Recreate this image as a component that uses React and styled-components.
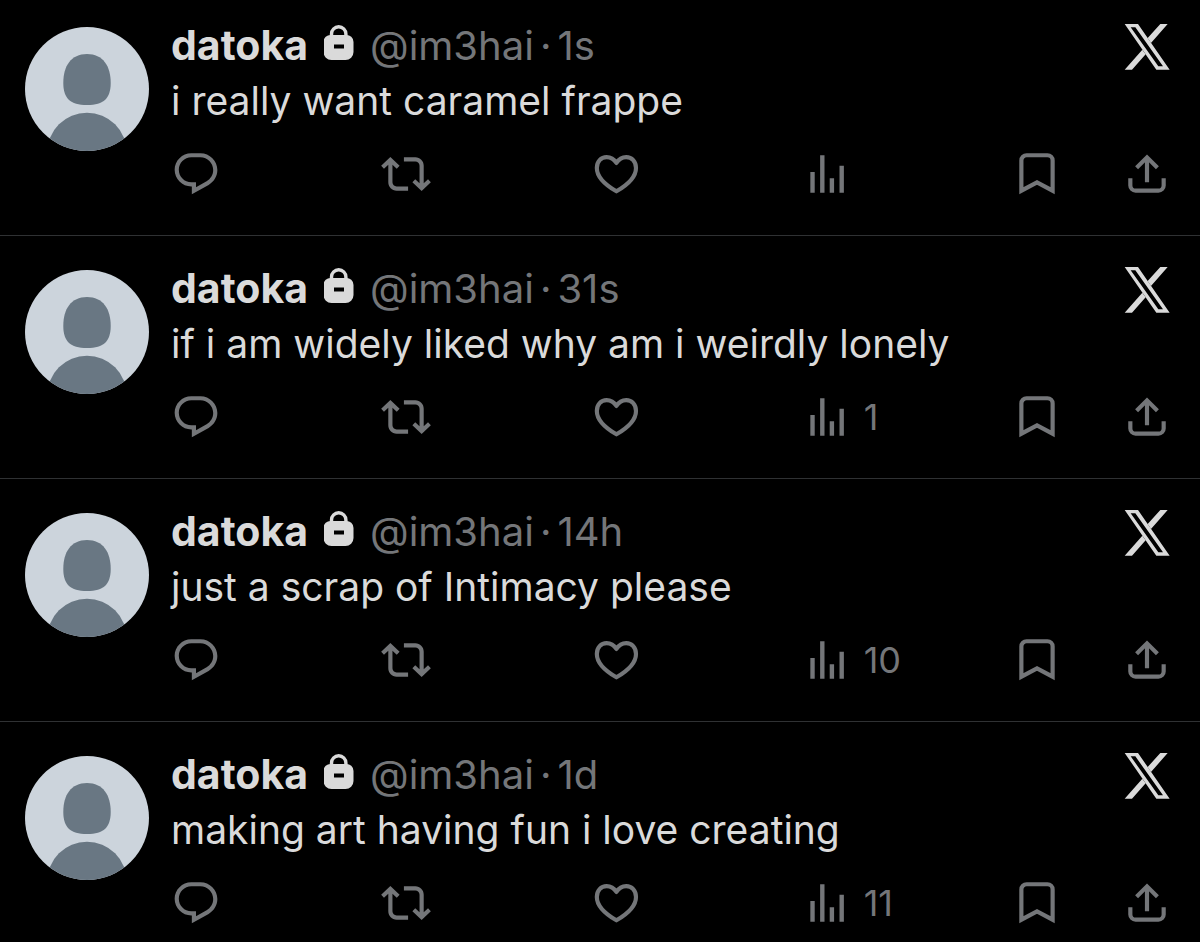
import React, { Component } from "react";
import styled, { createGlobalStyle } from "styled-components";

const GlobalStyle = createGlobalStyle`
  * {
    box-sizing: border-box;
  }

  body {
    margin: 0;
    background: #000;
    font-family: Inter, "Liberation Sans", sans-serif;
  }
`;

const Feed = styled.main`
  width: 100%;
`;

const Post = styled.article`
  display: flex;
  gap: 22px;
  padding: 24px 28px 36px 25px;
  border-bottom: 1px solid #2f3133;

  &:first-child {
    padding-top: 17px;
  }

  &:last-child {
    padding-bottom: 14px;
    border-bottom: none;
  }
`;

const Avatar = styled.svg`
  width: 124px;
  height: 124px;
  margin-top: 10px;
  border-radius: 50%;
  background: #ccd4dc;
  fill: #697783;
  flex: none;
`;

const Body = styled.div`
  flex: 1;
  min-width: 0;
`;

const Header = styled.header`
  display: flex;
  align-items: center;
  justify-content: space-between;
  height: 56px;
`;

const Author = styled.div`
  display: flex;
  align-items: baseline;
  gap: 16px;
  font-size: 40px;
  line-height: 56px;
  color: #747679;
  white-space: nowrap;
`;

const Name = styled.a`
  color: #dadada;
  font-size: 41px;
  font-weight: 700;
  text-decoration: none;
`;

const Meta = styled.div`
  display: flex;
  gap: 6px;
`;

const Handle = styled.a`
  color: inherit;
  text-decoration: none;
`;

const Lock = styled.svg`
  width: 30px;
  height: 35px;
`;

const Logo = styled.svg`
  width: 50px;
  height: 50px;
  fill: #dadada;
  flex: none;
`;

const Text = styled.p`
  margin: 0;
  font-size: 39px;
  line-height: 56px;
  color: #dadada;
`;

const Actions = styled.div`
  display: grid;
  grid-template-columns: repeat(4, 21fr) 11fr 5fr;
  margin-top: 20px;
`;

const Action = styled.button`
  display: flex;
  align-items: center;
  gap: 12px;
  height: 50px;
  padding: 0;
  border: none;
  background: none;
  color: #747679;
  font-family: inherit;
  font-size: 36px;
  cursor: pointer;
`;

const Icon = styled.svg`
  width: 50px;
  height: 50px;
  fill: currentColor;
  flex: none;
`;

const LineIcon = styled(Icon)`
  fill: none;
  stroke: currentColor;
  stroke-width: 2;
`;

const posts = [
  { time: "1s", text: "i really want caramel frappe", views: "" },
  { time: "31s", text: "if i am widely liked why am i weirdly lonely", views: "1" },
  { time: "14h", text: "just a scrap of Intimacy please", views: "10" },
  { time: "1d", text: "making art having fun i love creating", views: "11" }
];

const DefaultAvatar = () => (
  <Avatar viewBox="0 0 124 124" role="img" aria-label="datoka">
    <path d="M62 27C78 27 85.7 39 85.7 56C85.7 71 79 78 62 78C45 78 38.3 71 38.3 56C38.3 39 46 27 62 27Z" />
    <circle cx="62" cy="125.4" r="39.7" />
  </Avatar>
);

const LockIcon = () => (
  <Lock viewBox="0 0 30 35" role="img" aria-label="Protected account">
    <path d="M7.5 13V9a7.2 7.2 0 0 1 14.4 0v4" fill="none" stroke="#dadada" strokeWidth="3.4" />
    <path
      fill="#dadada"
      fillRule="evenodd"
      d="M7 10h15a7 7 0 0 1 7.5 7V27a8 8 0 0 1-8 8H7.500a8 8 0 0 1-8-8V17a7 7 0 0 1 7.5-7zM10 19.5v4h10v-4z"
    />
  </Lock>
);

const XLogo = () => (
  <Logo viewBox="12 6 150 150" role="img" aria-label="X">
    <path fillRule="evenodd" d="M20 18H60L155 155H115ZM38 28L121 145H135L52 28Z" />
    <path d="M127 18H149L99 75L89 60ZM20 155H42L83 109L73 95Z" />
  </Logo>
);

const ReplyIcon = () => (
  <Icon viewBox="0 0 24 24">
    <path d="M1.751 10c0-4.42 3.584-8 8.005-8h4.366c4.49 0 8.129 3.64 8.129 8.13 0 2.96-1.607 5.68-4.196 7.11l-8.054 4.46v-3.69h-.067c-4.49.1-8.183-3.51-8.183-8.01zm8.005-6c-3.317 0-6.005 2.69-6.005 6 0 3.37 2.77 6.08 6.138 6.01l.351-.01h1.761v2.3l5.087-2.81c1.951-1.08 3.163-3.13 3.163-5.36 0-3.39-2.744-6.13-6.129-6.13H9.756z" />
  </Icon>
);

const RepostIcon = () => (
  <Icon viewBox="0 0 24 24">
    <path d="M4.5 3.88l4.432 4.14-1.364 1.46L5.5 7.55V16c0 1.1.896 2 2 2H13v2H7.5c-2.209 0-4-1.79-4-4V7.55L1.432 9.48.068 8.02 4.5 3.88zM16.5 6H11V4h5.5c2.209 0 4 1.79 4 4v8.45l2.068-1.93 1.364 1.46-4.432 4.14-4.432-4.14 1.364-1.46 2.068 1.93V8c0-1.1-.896-2-2-2z" />
  </Icon>
);

const LikeIcon = () => (
  <LineIcon viewBox="0 0 24 24">
    <path
      strokeLinejoin="round"
      d="M12.2 6.7C11 4.8 9.3 3.9 7.5 3.9C4.8 3.9 2.8 6.1 2.8 9.1C2.8 13.4 7 17.3 12.2 20.3C17.4 17.3 21.6 13.4 21.6 9.1C21.6 6.1 19.6 3.9 16.9 3.9C15.1 3.9 13.4 4.8 12.2 6.7Z"
    />
  </LineIcon>
);

const ViewsIcon = () => (
  <Icon viewBox="0 0 24 24">
    <path d="M8.7 21V3h2.1v18zM18 21V8h2.100v13zM4 21V11h2.100v10zM13.300 21v-7h2.100v7z" />
  </Icon>
);

const BookmarkIcon = () => (
  <LineIcon viewBox="0 0 24 24">
    <path d="M4.5 20V5.5A2.5 2.5 0 0 1 7 3h10a2.5 2.5 0 0 1 2.5 2.5V20L12 16z" />
  </LineIcon>
);

const ShareIcon = () => (
  <LineIcon viewBox="0 0 24 24">
    <path d="M4 14v3.5A2.5 2.5 0 0 0 6.5 20h11a2.5 2.5 0 0 0 2.5-2.5V14M12 16V4M7 9l5-5 5 5" />
  </LineIcon>
);

class App extends Component {
  renderPost = post => (
    <Post key={post.time}>
      <DefaultAvatar />
      <Body>
        <Header>
          <Author>
            <Name href="#profile">datoka</Name>
            <LockIcon />
            <Meta>
              <Handle href="#profile">@im3hai</Handle>
              <span>·</span>
              <time>{post.time}</time>
            </Meta>
          </Author>
          <XLogo />
        </Header>
        <Text>{post.text}</Text>
        <Actions>
          <Action type="button" aria-label="Reply">
            <ReplyIcon />
          </Action>
          <Action type="button" aria-label="Repost">
            <RepostIcon />
          </Action>
          <Action type="button" aria-label="Like">
            <LikeIcon />
          </Action>
          <Action type="button" aria-label={`${post.views} Views`}>
            <ViewsIcon />
            {post.views}
          </Action>
          <Action type="button" aria-label="Bookmark">
            <BookmarkIcon />
          </Action>
          <Action type="button" aria-label="Share">
            <ShareIcon />
          </Action>
        </Actions>
      </Body>
    </Post>
  );

  render() {
    return (
      <>
        <GlobalStyle />
        <Feed>{posts.map(this.renderPost)}</Feed>
      </>
    );
  }
}

export default App;
